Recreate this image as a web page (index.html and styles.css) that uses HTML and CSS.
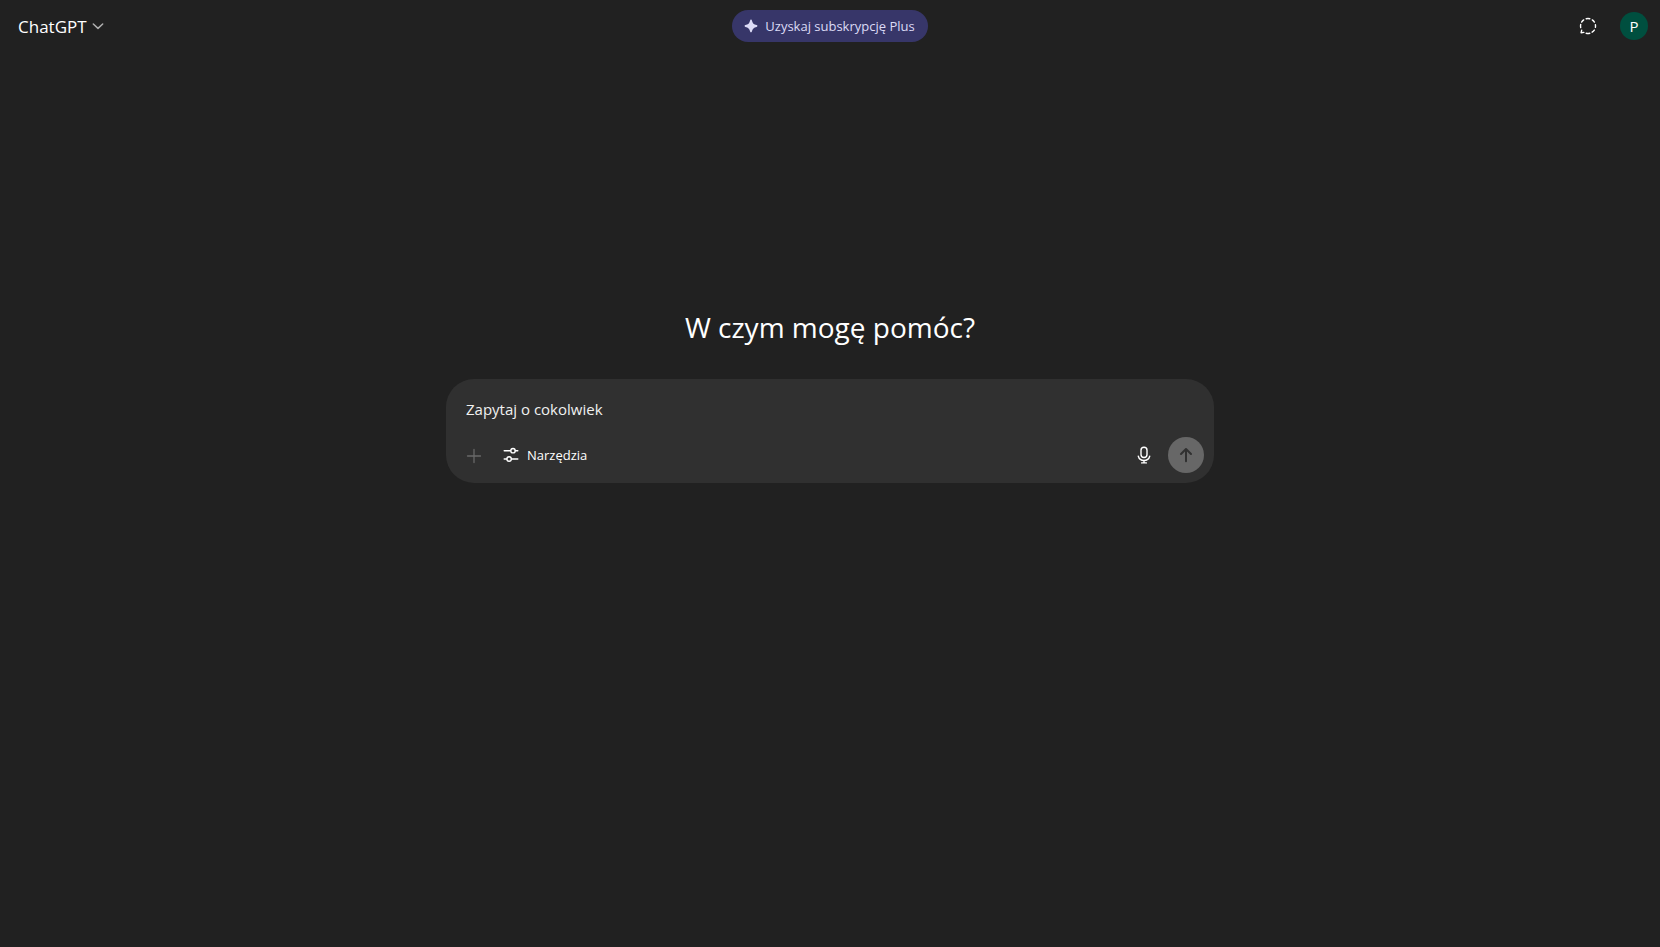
FILE: index.html
```
<!DOCTYPE html>
<html lang="pl">
<head>
  <meta charset="UTF-8" />
  <meta name="viewport" content="width=device-width, initial-scale=1" />
  <title>ChatGPT</title>
  <link rel="stylesheet" href="styles.css">
</head>
<body>

  <header>
    <div class="header-left">
      <button class="model-button" type="button">
        ChatGPT
        <svg width="12" height="12" viewBox="0 0 12 12" fill="none" stroke="currentColor" stroke-width="1.5" stroke-linecap="round" stroke-linejoin="round" aria-hidden="true">
          <path d="M1.3 4 6 8.4 10.7 4" />
        </svg>
      </button>
    </div>

    <button class="plus-button" type="button">
      <svg width="14" height="14" viewBox="0 0 14 14" fill="currentColor" aria-hidden="true">
        <path d="M7 .6c.5 0 .8.3.9.8.6 2.800 1.900 4.100 4.700 4.700.5.1.8.4.8.9s-.3.8-.8.9c-2.800.6-4.100 1.900-4.700 4.700-.1.5-.4.8-.9.8s-.8-.3-.9-.8C5.500 9.800 4.200 8.500 1.400 7.900.9 7.800.6 7.500.6 7s.3-.8.8-.9C4.200 5.500 5.500 4.200 6.100 1.400 6.200.9 6.500.6 7 .6Z" />
      </svg>
      Uzyskaj subskrypcję Plus
    </button>

    <div class="header-right">
      <button class="icon-button" type="button" aria-label="Czat tymczasowy">
        <svg width="20" height="20" viewBox="0 0 20 20" fill="none" stroke="currentColor" stroke-width="1.4" stroke-linecap="round" stroke-linejoin="round" aria-hidden="true">
          <path d="M8.2 2.7a7.5 7.5 0 0 1 3.6 0M14.3 3.9a7.5 7.5 0 0 1 2.1 2.2M17.4 8.6a7.5 7.5 0 0 1 0 2.8M16.3 14.1a7.5 7.5 0 0 1-2.2 2.1M11.8 17.3a7.5 7.5 0 0 1-3.6 0M2.7 11.600a7.500 7.500 0 0 1 0-3.200M3.600 6.100a7.500 7.500 0 0 1 2.100-2.200M3.700 14.100 3.100 16.700 5.900 16.400" />
        </svg>
      </button>
      <button class="avatar" type="button" aria-label="Profil">P</button>
    </div>
  </header>

  <main>
    <h1>W czym mogę pomóc?</h1>

    <form class="composer">
      <input class="prompt" type="text" placeholder="Zapytaj o cokolwiek" aria-label="Zapytaj o cokolwiek" />

      <div class="toolbar">
        <button class="icon-button add" type="button" aria-label="Dodaj" disabled>
          <svg width="20" height="20" viewBox="0 0 20 20" fill="none" stroke="currentColor" stroke-width="1.3" stroke-linecap="round" aria-hidden="true">
            <path d="M10 4.500v13M3.500 11h13" />
          </svg>
        </button>
        <button class="tools" type="button">
          <svg width="20" height="20" viewBox="0 0 20 20" fill="none" stroke="currentColor" stroke-width="1.4" stroke-linecap="round" aria-hidden="true">
            <path d="M3.200 5.700h6.200M14.400 5.700h2.400M3.200 14h2.400M10.600 14h6.200" />
            <circle cx="12" cy="5.700" r="2.200" />
            <circle cx="8.100" cy="14" r="2.200" />
          </svg>
          Narzędzia
        </button>
        <button class="icon-button mic" type="button" aria-label="Dyktuj">
          <svg width="20" height="20" viewBox="0 0 20 20" fill="none" stroke="currentColor" stroke-width="1.4" stroke-linecap="round" aria-hidden="true">
            <rect x="7" y="2.200" width="6" height="10.300" rx="3" />
            <path d="M4.300 11.200c.7 2.500 3 4.300 5.700 4.300s5-1.800 5.700-4.300M10 15.500v2.400M7.600 17.900h4.800" />
          </svg>
        </button>
        <button class="send" type="submit" aria-label="Wyślij" disabled>
          <svg width="20" height="20" viewBox="0 0 20 20" fill="none" stroke="currentColor" stroke-width="2" stroke-linecap="round" stroke-linejoin="round" aria-hidden="true">
            <path d="M10 16.200v-12M5 9 10 4 15 9" />
          </svg>
        </button>
      </div>
    </form>
  </main>

</body>
</html>
```
FILE: styles.css
```
* {
  box-sizing: border-box;
}

body {
  display: flex;
  flex-direction: column;
  min-height: 100vh;
  margin: 0;
  background-color: #212121;
  color: #fff;
  font-family: "Segoe UI", "Open Sans", "Noto Sans", sans-serif;
  font-size: 14px;
}

button {
  display: flex;
  align-items: center;
  justify-content: center;
  padding: 0;
  border: 0;
  background: none;
  color: inherit;
  font: inherit;
  cursor: pointer;
}

header {
  display: grid;
  grid-template-columns: 1fr auto 1fr;
  align-items: center;
  height: 52px;
  padding: 0 8px;
}

.model-button {
  gap: 5px;
  height: 36px;
  padding: 0 10px;
  font-size: 17px;
}

.model-button svg {
  color: #afafaf;
}

.plus-button {
  gap: 7px;
  height: 32px;
  padding: 0 13px 0 12px;
  border-radius: 16px;
  background-color: #373669;
  color: #dcdbf6;
  font-size: 13px;
}

.header-right {
  display: flex;
  justify-content: flex-end;
  align-items: center;
  gap: 14px;
  padding-right: 4px;
}

.icon-button {
  width: 36px;
  height: 36px;
  border-radius: 50%;
}

.avatar {
  width: 28px;
  height: 28px;
  border-radius: 50%;
  background-color: #004f3f;
  font-size: 15px;
}

main {
  display: flex;
  flex-direction: column;
  align-items: center;
  padding: 27vh 16px 16px;
}

h1 {
  margin: 0 0 33px;
  font-size: 28px;
  font-weight: 400;
  line-height: 38px;
}

.composer {
  width: 100%;
  max-width: 768px;
  padding: 10px;
  border-radius: 28px;
  background-color: #303030;
}

.prompt {
  display: block;
  width: 100%;
  height: 40px;
  padding: 0 10px;
  border: 0;
  outline: 0;
  background: none;
  color: #fff;
  font: inherit;
  font-size: 15px;
}

.prompt::placeholder {
  color: #f0f0f0;
  opacity: 1;
}

.toolbar {
  display: flex;
  align-items: center;
  margin-top: 8px;
}

.add {
  color: #686868;
}

.tools {
  gap: 6px;
  height: 36px;
  padding: 0 9px;
  font-size: 13px;
}

.mic {
  margin-left: auto;
  margin-right: 6px;
}

.send {
  width: 36px;
  height: 36px;
  border-radius: 50%;
  background-color: #676767;
  color: #303030;
}
```
